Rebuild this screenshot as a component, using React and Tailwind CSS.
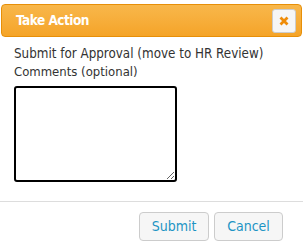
import React from 'react';

const App = () => {
  return (
    <div className="w-[303px] h-[252px] bg-white font-['DejaVu_Sans_Condensed','DejaVu_Sans',sans-serif] font-stretch-condensed text-[13px] text-[#333333] pt-1">
      <div className="mx-[1px] h-[33px] flex items-center justify-between rounded-[4px] border border-[#e78f08] bg-gradient-to-b from-[#f8b74a] to-[#f5a427] pl-[14px] pr-[5px]">
        <span className="font-bold text-white text-[13.5px] tracking-[-0.5px]">Take Action</span>
        <button className="w-[24px] h-[24px] flex items-center justify-center rounded-[3px] border border-[#cccccc] bg-[#f6f6f6]">
          <svg width="10" height="10" viewBox="0 0 10 10">
            <path d="M1.5 1.5L8.5 8.5M8.5 1.5L1.5 8.5" stroke="#ef8c08" strokeWidth="2.8" strokeLinecap="butt" />
          </svg>
        </button>
      </div>
      <div className="px-[14px] pt-[8px]">
        <div className="leading-[18px] text-[13.3px]">Submit for Approval (move to HR Review)</div>
        <div className="leading-[18px]">Comments (optional)</div>
        <textarea className="mt-[5px] block w-[163px] h-[96px] border-2 border-black rounded-[3px] outline-none resize" />
      </div>
      <div className="mt-[19px] border-t border-[#dddddd] flex justify-end gap-[5px] pr-[20px] pt-[10px]">
        <button className="w-[70px] h-[29px] rounded-[4px] border border-[#cccccc] bg-[#f6f6f6] text-[#1c94c4] text-[14px]">Submit</button>
        <button className="w-[69px] h-[29px] rounded-[4px] border border-[#cccccc] bg-[#f6f6f6] text-[#1c94c4] text-[14px]">Cancel</button>
      </div>
    </div>
  );
};

export default App;
